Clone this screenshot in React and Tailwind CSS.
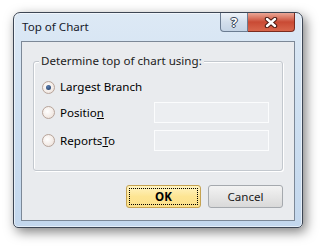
export default function App() {
  const font = { fontFamily: '"Noto Sans", "Open Sans", sans-serif' };

  return (
    <div
      className="w-[320px] h-[248px] bg-white pt-[12px] pl-[13px] overflow-hidden"
      style={font}
    >
      <div className="w-[290px] h-[216px] flex flex-col rounded-t-[7px] rounded-b-[5px] border border-[#3d4654] bg-gradient-to-b from-[#dde9f5] via-[#cddff1] to-[#c3d7ed] shadow-[3px_4px_12px_rgba(0,0,0,0.5),inset_0_0_0_1px_rgba(255,255,255,0.55)]">
        {/* title bar */}
        <div className="h-[28px] flex items-start pl-[8px] pr-[7px]">
          <span className="mt-[6px] text-[11.6px] leading-[16px] text-[#17202b]">
            Top of Chart
          </span>
          <div className="ml-auto flex">
            <div className="w-[28px] h-[19px] flex items-center justify-center rounded-bl-[4px] border border-t-0 border-[#6b7c91] bg-gradient-to-b from-[#eef3f9] via-[#d3dfec] to-[#c5d4e5]">
              <span
                className="text-[13px] leading-none font-bold text-white"
                style={{
                  textShadow:
                    "0 0 1px #2c3a4c, 1px 0 0 #3c4a5c, -1px 0 0 #3c4a5c, 0 1px 0 #3c4a5c, 0 -1px 0 #3c4a5c",
                }}
              >
                ?
              </span>
            </div>
            <div className="w-[47px] h-[19px] flex items-center justify-center rounded-br-[4px] border border-t-0 border-l-0 border-[#7b2b1f] bg-gradient-to-b from-[#e9a696] via-[#c94a34] to-[#d8664c]">
              <svg width="14" height="11" viewBox="0 0 14 11">
                <path
                  d="M3 2 L11 9 M11 2 L3 9"
                  stroke="#4a1a12"
                  strokeWidth="4.4"
                  strokeLinecap="round"
                />
                <path
                  d="M3 2 L11 9 M11 2 L3 9"
                  stroke="#ffffff"
                  strokeWidth="2.4"
                  strokeLinecap="round"
                />
              </svg>
            </div>
          </div>
        </div>

        {/* client area */}
        <div className="mx-[7px] mb-[6px] flex-1 border border-[#7c8897] bg-[#e9ebee] text-[11.6px] leading-[16px] text-black">
          <div className="relative ml-[11px] mt-[19px] w-[250px] h-[110px] rounded-[3px] border border-[#c3c8ce] shadow-[inset_1px_1px_0_#ffffff,1px_1px_0_#ffffff] pl-[8px] pt-[14px]">
            <span className="absolute -top-[9px] left-[5px] bg-[#e9ebee] px-[2px] text-[#1b1b1b]">
              Determine top of chart using:
            </span>

            <div className="grid grid-cols-[112px_115px] items-center">
              <div className="h-[22px] flex items-center gap-[5px]">
                <Radio checked />
                <span>Largest Branch</span>
              </div>
              <div />
            </div>

            <div className="grid grid-cols-[112px_115px] items-center mt-[4px]">
              <div className="flex items-center gap-[5px]">
                <Radio />
                <span>
                  Positio<span className="underline underline-offset-1">n</span>
                </span>
              </div>
              <div className="h-[21px] border border-[#fbfcfd] bg-[#eceef1]" />
            </div>

            <div className="grid grid-cols-[112px_115px] items-center mt-[7px]">
              <div className="flex items-center gap-[5px]">
                <Radio />
                <span>
                  Reports<span className="underline underline-offset-1">T</span>o
                </span>
              </div>
              <div className="h-[21px] border border-[#fbfcfd] bg-[#eceef1]" />
            </div>
          </div>

          <div className="flex justify-end gap-[7px] pr-[11px] mt-[14px]">
            <button className="w-[75px] h-[23px] rounded-[3px] border border-[#c5a251] bg-gradient-to-b from-[#fff4c2] via-[#fde593] to-[#fbe08a] p-[2px]">
              <div className="w-full h-full flex items-center justify-center border border-dotted border-black font-bold text-[11.6px] text-black">
                OK
              </div>
            </button>
            <button className="w-[75px] h-[23px] rounded-[3px] border border-[#a5a9ae] bg-gradient-to-b from-[#f3f3f3] via-[#e6e6e6] to-[#d9d9d9] flex items-center justify-center text-[11.6px] text-[#1a1a1a]">
              Cancel
            </button>
          </div>
        </div>
      </div>
    </div>
  );
}

function Radio({ checked }) {
  return (
    <div className="w-[13px] h-[13px] shrink-0 rounded-full border border-[#b7a49a] bg-[radial-gradient(circle_at_40%_40%,#ffffff,#f3ebe6_60%,#e2d5cd)] flex items-center justify-center">
      {checked && (
        <div className="w-[5px] h-[5px] rounded-full bg-[radial-gradient(circle_at_40%_35%,#5c7fb0,#1b3762)]" />
      )}
    </div>
  );
}
